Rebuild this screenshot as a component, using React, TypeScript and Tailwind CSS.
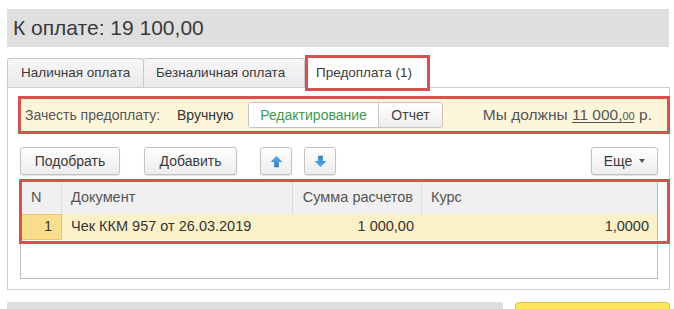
const btn =
  "flex items-center justify-center h-[28px] rounded-[3px] border border-[#c2c2c2] bg-linear-to-b from-white to-[#ededed] shadow-[0_1px_1px_rgba(0,0,0,0.12)] text-[14px] text-[#3a3a3a]";

const Arrow = ({ down }: { down?: boolean }) => (
  <svg width="13" height="13" viewBox="0 0 12 12" className={down ? "rotate-180" : ""}>
    <defs>
      <linearGradient id={down ? "ad" : "au"} x1="0" y1="0" x2="0" y2="1">
        <stop offset="0" stopColor="#5fb0ee" />
        <stop offset="1" stopColor="#2f7fc8" />
      </linearGradient>
    </defs>
    <path d="M6 0.8 L11.4 6.4 H8.2 V11.2 H3.8 V6.4 H0.6 Z" fill={`url(#${down ? "ad" : "au"})`} />
  </svg>
);

const App = () => {
  return (
    <div className="w-[674px] h-[309px] overflow-hidden bg-white pl-[7px] pr-[4px] pt-[9px] font-['Liberation_Sans',Arial,sans-serif] text-[#3a3a3a]">
      {/* header */}
      <div className="h-[38px] mr-[1px] bg-[#dfdfdf] flex items-center pl-[6px] text-[21px] text-[#3a3a3a]">
        К оплате: 19 100,00
      </div>

      {/* tabs */}
      <div className="mt-[11px] h-[29px] flex items-end relative z-10 text-[13.5px]">
        <div className="h-[29px] w-[137px] flex items-center pl-[13px] border border-b-0 border-[#c8c8c8] rounded-t-[3px] bg-linear-to-b from-[#f7f7f7] to-[#e9e9e9]">
          Наличная оплата
        </div>
        <div className="h-[29px] w-[161px] flex items-center pl-[12px] border border-l-0 border-b-0 border-[#c8c8c8] rounded-t-[3px] bg-linear-to-b from-[#f7f7f7] to-[#e9e9e9]">
          Безналичная оплата
        </div>
        <div className="h-[36px] w-[125px] mb-[-4px] flex items-center pl-[8px] bg-white border-[3px] border-[#d9504c]">
          Предоплата (1)
        </div>
      </div>

      {/* panel */}
      <div className="h-[203px] border border-[#cfcfcf] pl-[10px] pt-[8px]">
        {/* band */}
        <div className="h-[38px] mr-[-1px] border-[3px] border-[#d9504c] bg-[#fcf5da] flex items-center pl-[4px] pr-[15px] text-[14px]">
          <span className="w-[152px] text-[#555]">Зачесть предоплату:</span>
          <span className="w-[71px] text-[#333]">Вручную</span>
          <div className="flex h-[26px] rounded-[3px] border border-[#c4c4c4] overflow-hidden">
            <div className="w-[129px] flex items-center justify-center bg-white text-[#3d9a4e]">
              Редактирование
            </div>
            <div className="w-[64px] flex items-center justify-center border-l border-[#c4c4c4] bg-linear-to-b from-white to-[#eeeeee] text-[#444]">
              Отчет
            </div>
          </div>
          <span className="ml-auto text-[15.5px] text-[#555]">
            Мы должны{" "}
            <span className="underline underline-offset-2">
              11 000,<span className="text-[11px]">00</span>
            </span>{" "}
            р.
          </span>
        </div>

        {/* buttons */}
        <div className="mt-[13px] ml-[2px] w-[638px] flex items-center">
          <div className={`${btn} w-[100px]`}>Подобрать</div>
          <div className={`${btn} w-[93px] ml-[24px]`}>Добавить</div>
          <div className={`${btn} w-[32px] ml-[23px]`}>
            <Arrow />
          </div>
          <div className={`${btn} w-[32px] ml-[12px]`}>
            <Arrow down />
          </div>
          <div className={`${btn} w-[67px] ml-auto gap-[7px]`}>
            Еще
            <span className="w-0 h-0 border-l-[3px] border-r-[3px] border-t-[4px] border-l-transparent border-r-transparent border-t-[#555]" />
          </div>
        </div>

        {/* table */}
        <div className="relative mt-[5px] ml-[2px] w-[638px] h-[99px] border border-[#bdbdbd] text-[14.5px]">
          <div className="flex h-[33px] bg-[#f0f0f0] text-[#555]">
            <div className="w-[41px] flex items-center pl-[10px] border-r border-[#dcdcdc]">N</div>
            <div className="w-[231px] flex items-center pl-[9px] border-r border-[#dcdcdc]">Документ</div>
            <div className="w-[129px] flex items-center justify-end pr-[8px] border-r border-[#dcdcdc]">
              Сумма расчетов
            </div>
            <div className="flex-1 flex items-center pl-[9px]">Курс</div>
          </div>
          <div className="flex h-[26px] bg-[#fbf1c9] text-[#333]">
            <div className="w-[41px] flex items-center justify-end pr-[9px] bg-[#f9df8d] border border-[#f2c264]">1</div>
            <div className="w-[231px] flex items-center pl-[9px]">Чек ККМ 957 от 26.03.2019</div>
            <div className="w-[129px] flex items-center justify-end pr-[8px]">1 000,00</div>
            <div className="flex-1 flex items-center justify-end pr-[8px]">1,0000</div>
          </div>
          <div className="absolute top-[-2px] left-[-2px] right-[-13px] h-[65px] border-[3px] border-[#d9504c] pointer-events-none" />
        </div>
      </div>

      {/* bottom */}
      <div className="mt-[12px] flex">
        <div className="w-[496px] h-[20px] bg-[#dedede] rounded-t-[2px]" />
        <div className="ml-[12px] w-[155px] h-[20px] bg-[#fbe55a] border border-[#e0c23a] rounded-t-[4px]" />
      </div>
    </div>
  );
};

export default App;
